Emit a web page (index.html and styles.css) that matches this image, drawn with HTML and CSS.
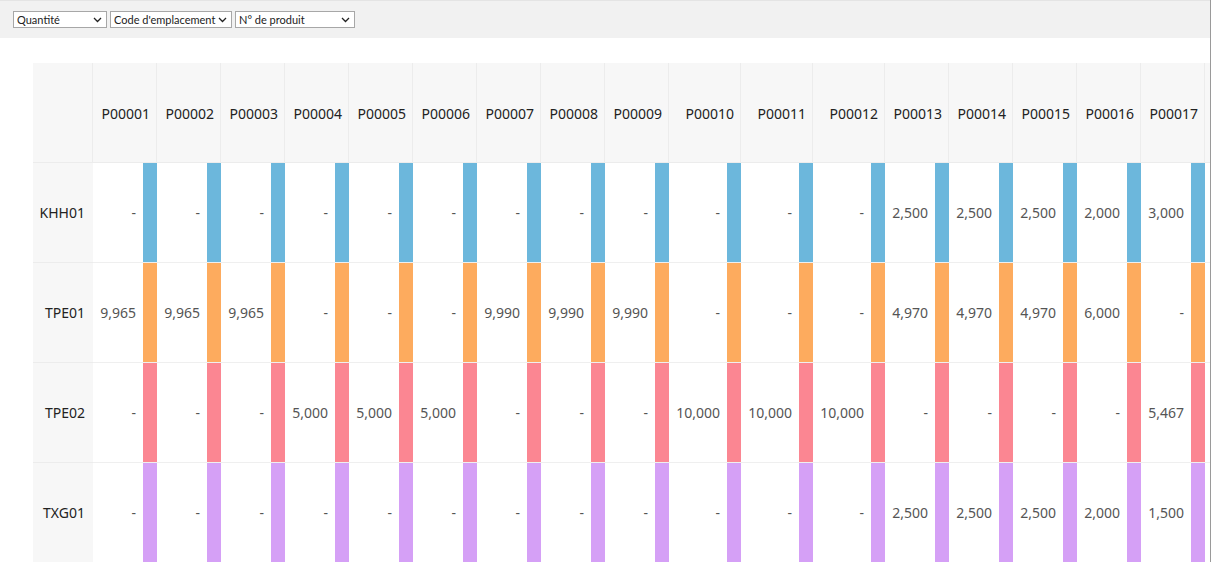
FILE: index.html
```html
<!DOCTYPE html>
<html lang="fr">
<head>
<meta charset="utf-8">
<title>Pivot</title>
<link rel="stylesheet" href="styles.css">
</head>
<body>
<div class="page">
  <div class="toolbar">
    <label class="selwrap sel-qty">
      <select class="sel"><option>Quantité</option></select>
      <svg class="chev" width="9" height="6" viewBox="0 0 9 6"><path d="M1 1 L4.5 4.5 L8 1" fill="none" stroke="#222" stroke-width="1.3"/></svg>
    </label>
    <label class="selwrap sel-loc">
      <select class="sel"><option>Code d'emplacement</option></select>
      <svg class="chev" width="9" height="6" viewBox="0 0 9 6"><path d="M1 1 L4.5 4.5 L8 1" fill="none" stroke="#222" stroke-width="1.3"/></svg>
    </label>
    <label class="selwrap sel-prod">
      <select class="sel"><option>N° de produit</option></select>
      <svg class="chev" width="9" height="6" viewBox="0 0 9 6"><path d="M1 1 L4.5 4.5 L8 1" fill="none" stroke="#222" stroke-width="1.3"/></svg>
    </label>
  </div>
  <div class="content">
    <div class="grid">
      <div class="row head">
        <div class="hcell"></div>
        <div class="hcell">P00001</div><div class="hcell">P00002</div><div class="hcell">P00003</div>
        <div class="hcell">P00004</div><div class="hcell">P00005</div><div class="hcell">P00006</div>
        <div class="hcell">P00007</div><div class="hcell">P00008</div><div class="hcell">P00009</div>
        <div class="hcell">P00010</div><div class="hcell">P00011</div><div class="hcell">P00012</div>
        <div class="hcell">P00013</div><div class="hcell">P00014</div><div class="hcell">P00015</div>
        <div class="hcell">P00016</div><div class="hcell">P00017</div><div class="hcell"></div>
      </div>
      <div class="row r-blue">
        <div class="rlabel">KHH01</div>
        <div class="cell"><span class="val">-</span><i class="bar"></i></div>
        <div class="cell"><span class="val">-</span><i class="bar"></i></div>
        <div class="cell"><span class="val">-</span><i class="bar"></i></div>
        <div class="cell"><span class="val">-</span><i class="bar"></i></div>
        <div class="cell"><span class="val">-</span><i class="bar"></i></div>
        <div class="cell"><span class="val">-</span><i class="bar"></i></div>
        <div class="cell"><span class="val">-</span><i class="bar"></i></div>
        <div class="cell"><span class="val">-</span><i class="bar"></i></div>
        <div class="cell"><span class="val">-</span><i class="bar"></i></div>
        <div class="cell"><span class="val">-</span><i class="bar"></i></div>
        <div class="cell"><span class="val">-</span><i class="bar"></i></div>
        <div class="cell"><span class="val">-</span><i class="bar"></i></div>
        <div class="cell"><span class="val">2,500</span><i class="bar"></i></div>
        <div class="cell"><span class="val">2,500</span><i class="bar"></i></div>
        <div class="cell"><span class="val">2,500</span><i class="bar"></i></div>
        <div class="cell"><span class="val">2,000</span><i class="bar"></i></div>
        <div class="cell"><span class="val">3,000</span><i class="bar"></i></div>
        <div class="cell"><span class="val"></span><i class="bar"></i></div>
      </div>
      <div class="row r-orange">
        <div class="rlabel">TPE01</div>
        <div class="cell"><span class="val">9,965</span><i class="bar"></i></div>
        <div class="cell"><span class="val">9,965</span><i class="bar"></i></div>
        <div class="cell"><span class="val">9,965</span><i class="bar"></i></div>
        <div class="cell"><span class="val">-</span><i class="bar"></i></div>
        <div class="cell"><span class="val">-</span><i class="bar"></i></div>
        <div class="cell"><span class="val">-</span><i class="bar"></i></div>
        <div class="cell"><span class="val">9,990</span><i class="bar"></i></div>
        <div class="cell"><span class="val">9,990</span><i class="bar"></i></div>
        <div class="cell"><span class="val">9,990</span><i class="bar"></i></div>
        <div class="cell"><span class="val">-</span><i class="bar"></i></div>
        <div class="cell"><span class="val">-</span><i class="bar"></i></div>
        <div class="cell"><span class="val">-</span><i class="bar"></i></div>
        <div class="cell"><span class="val">4,970</span><i class="bar"></i></div>
        <div class="cell"><span class="val">4,970</span><i class="bar"></i></div>
        <div class="cell"><span class="val">4,970</span><i class="bar"></i></div>
        <div class="cell"><span class="val">6,000</span><i class="bar"></i></div>
        <div class="cell"><span class="val">-</span><i class="bar"></i></div>
        <div class="cell"><span class="val"></span><i class="bar"></i></div>
      </div>
      <div class="row r-pink">
        <div class="rlabel">TPE02</div>
        <div class="cell"><span class="val">-</span><i class="bar"></i></div>
        <div class="cell"><span class="val">-</span><i class="bar"></i></div>
        <div class="cell"><span class="val">-</span><i class="bar"></i></div>
        <div class="cell"><span class="val">5,000</span><i class="bar"></i></div>
        <div class="cell"><span class="val">5,000</span><i class="bar"></i></div>
        <div class="cell"><span class="val">5,000</span><i class="bar"></i></div>
        <div class="cell"><span class="val">-</span><i class="bar"></i></div>
        <div class="cell"><span class="val">-</span><i class="bar"></i></div>
        <div class="cell"><span class="val">-</span><i class="bar"></i></div>
        <div class="cell"><span class="val">10,000</span><i class="bar"></i></div>
        <div class="cell"><span class="val">10,000</span><i class="bar"></i></div>
        <div class="cell"><span class="val">10,000</span><i class="bar"></i></div>
        <div class="cell"><span class="val">-</span><i class="bar"></i></div>
        <div class="cell"><span class="val">-</span><i class="bar"></i></div>
        <div class="cell"><span class="val">-</span><i class="bar"></i></div>
        <div class="cell"><span class="val">-</span><i class="bar"></i></div>
        <div class="cell"><span class="val">5,467</span><i class="bar"></i></div>
        <div class="cell"><span class="val"></span><i class="bar"></i></div>
      </div>
      <div class="row r-purple">
        <div class="rlabel">TXG01</div>
        <div class="cell"><span class="val">-</span><i class="bar"></i></div>
        <div class="cell"><span class="val">-</span><i class="bar"></i></div>
        <div class="cell"><span class="val">-</span><i class="bar"></i></div>
        <div class="cell"><span class="val">-</span><i class="bar"></i></div>
        <div class="cell"><span class="val">-</span><i class="bar"></i></div>
        <div class="cell"><span class="val">-</span><i class="bar"></i></div>
        <div class="cell"><span class="val">-</span><i class="bar"></i></div>
        <div class="cell"><span class="val">-</span><i class="bar"></i></div>
        <div class="cell"><span class="val">-</span><i class="bar"></i></div>
        <div class="cell"><span class="val">-</span><i class="bar"></i></div>
        <div class="cell"><span class="val">-</span><i class="bar"></i></div>
        <div class="cell"><span class="val">-</span><i class="bar"></i></div>
        <div class="cell"><span class="val">2,500</span><i class="bar"></i></div>
        <div class="cell"><span class="val">2,500</span><i class="bar"></i></div>
        <div class="cell"><span class="val">2,500</span><i class="bar"></i></div>
        <div class="cell"><span class="val">2,000</span><i class="bar"></i></div>
        <div class="cell"><span class="val">1,500</span><i class="bar"></i></div>
        <div class="cell"><span class="val"></span><i class="bar"></i></div>
      </div>
    </div>
  </div>
</div>
</body>
</html>
```
FILE: styles.css
```css
html, body {
  margin: 0;
  padding: 0;
  background: #ffffff;
}

body {
  font-family: "Noto Sans", "Open Sans", "DejaVu Sans", sans-serif;
  color: #222222;
}

.page {
  width: 1210px;
  height: 100vh;
  border-right: 1px solid #9a9a9a;
  overflow: hidden;
}

.toolbar {
  box-sizing: border-box;
  height: 38px;
  background: #f1f1f1;
  border-top: 1px solid #e4e4e4;
  padding: 10px 0 0 13px;
  display: flex;
  gap: 3px;
  align-items: flex-start;
}

.selwrap {
  position: relative;
  display: block;
  height: 17px;
}

.sel {
  -webkit-appearance: none;
  appearance: none;
  box-sizing: border-box;
  display: block;
  width: 100%;
  height: 17px;
  margin: 0;
  padding: 0 8px 0 3px;
  border: 1px solid #a7a7a7;
  border-radius: 0;
  background: #ffffff;
  color: #222222;
  font-family: Lato, "Noto Sans", sans-serif;
  font-size: 11px;
  line-height: 15px;
  outline: none;
}

.chev {
  position: absolute;
  right: 5px;
  top: 6px;
  pointer-events: none;
}

.sel-qty { width: 94px; }
.sel-loc { width: 122px; }
.sel-prod { width: 120px; }

.content {
  padding: 25px 0 0 33px;
}

.grid {
  display: grid;
  width: max-content;
  grid-template-columns: 60px repeat(9, 64px) repeat(3, 72px) repeat(6, 64px);
  grid-auto-rows: 100px;
}

.row {
  display: contents;
}

.hcell {
  box-sizing: border-box;
  background: #f7f7f7;
  border-right: 1px solid #ececec;
  border-bottom: 1px solid #ececec;
  display: flex;
  align-items: center;
  justify-content: flex-end;
  padding: 2px 6px 0 0;
  font-size: 14px;
  color: #222222;
}

.rlabel {
  box-sizing: border-box;
  background: #f7f7f7;
  border-bottom: 1px solid #ececec;
  display: flex;
  align-items: center;
  justify-content: flex-end;
  padding-right: 8px;
  font-size: 14px;
  color: #222222;
}

.cell {
  box-sizing: border-box;
  background: #ffffff;
  border-bottom: 1px solid #efefef;
  display: flex;
  align-items: stretch;
}

.val {
  flex: 1;
  display: flex;
  align-items: center;
  justify-content: flex-end;
  padding-right: 7px;
  font-size: 14px;
  color: #555555;
}

.bar {
  width: 14px;
  flex: none;
}

.r-blue .bar { background: #6cb7dc; }
.r-orange .bar { background: #fdab5e; }
.r-pink .bar { background: #fb8692; }
.r-purple .bar { background: #d5a0f6; }
```
